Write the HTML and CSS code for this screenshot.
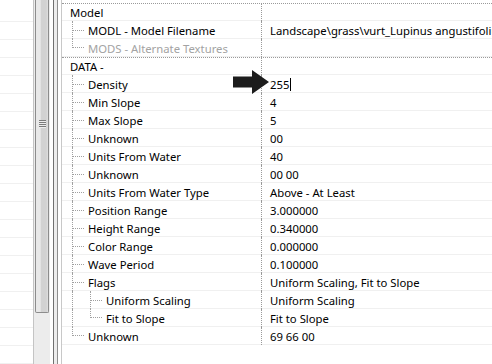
FILE: index.html
```html
<!DOCTYPE html>
<html lang="en">
<head>
    <meta charset="UTF-8">
    <meta name="viewport" content="width=device-width, initial-scale=1.0">
    <title>Propriétés</title>
    <link rel="stylesheet" href="styles.css">
</head>
<body>
    <div class="fenetre">
        <!-- Liste de gauche (coupée) -->
        <div class="liste"></div>

        <!-- Barre de défilement -->
        <div class="scrollbar">
            <div class="thumb"><span class="grip"></span></div>
            <div class="track"></div>
        </div>

        <div class="separateur"></div>

        <!-- Grille des propriétés -->
        <div class="grille">
            <div class="ligne categorie premiere">
                <div class="nom">Model</div>
                <div class="valeur"></div>
            </div>
            <div class="ligne">
                <div class="nom"><span class="branche"></span>MODL - Model Filename</div>
                <div class="valeur">Landscape\grass\vurt_Lupinus angustifolius.nif</div>
            </div>
            <div class="ligne inactive">
                <div class="nom"><span class="branche fin"></span>MODS - Alternate Textures</div>
                <div class="valeur"></div>
            </div>

            <div class="ligne categorie">
                <div class="nom">DATA -</div>
                <div class="valeur"></div>
            </div>
            <div class="ligne">
                <div class="nom"><span class="branche"></span>Density</div>
                <div class="valeur">255<span class="curseur"></span></div>
                <svg class="fleche" width="36" height="24" viewBox="0 0 36 24">
                    <polygon points="0,6.5 19,6.5 19,0 36,12 19,24 19,17.5 0,17.5" fill="#1c1c1c"/>
                </svg>
            </div>
            <div class="ligne">
                <div class="nom"><span class="branche"></span>Min Slope</div>
                <div class="valeur">4</div>
            </div>
            <div class="ligne">
                <div class="nom"><span class="branche"></span>Max Slope</div>
                <div class="valeur">5</div>
            </div>
            <div class="ligne">
                <div class="nom"><span class="branche"></span>Unknown</div>
                <div class="valeur">00</div>
            </div>
            <div class="ligne">
                <div class="nom"><span class="branche"></span>Units From Water</div>
                <div class="valeur">40</div>
            </div>
            <div class="ligne">
                <div class="nom"><span class="branche"></span>Unknown</div>
                <div class="valeur">00 00</div>
            </div>
            <div class="ligne">
                <div class="nom"><span class="branche"></span>Units From Water Type</div>
                <div class="valeur">Above - At Least</div>
            </div>
            <div class="ligne">
                <div class="nom"><span class="branche"></span>Position Range</div>
                <div class="valeur">3.000000</div>
            </div>
            <div class="ligne">
                <div class="nom"><span class="branche"></span>Height Range</div>
                <div class="valeur">0.340000</div>
            </div>
            <div class="ligne">
                <div class="nom"><span class="branche"></span>Color Range</div>
                <div class="valeur">0.000000</div>
            </div>
            <div class="ligne">
                <div class="nom"><span class="branche"></span>Wave Period</div>
                <div class="valeur">0.100000</div>
            </div>
            <div class="ligne">
                <div class="nom"><span class="branche"></span>Flags</div>
                <div class="valeur">Uniform Scaling, Fit to Slope</div>
            </div>
            <div class="ligne">
                <div class="nom"><span class="trait"></span><span class="branche"></span>Uniform Scaling</div>
                <div class="valeur">Uniform Scaling</div>
            </div>
            <div class="ligne">
                <div class="nom"><span class="trait"></span><span class="branche fin"></span>Fit to Slope</div>
                <div class="valeur">Fit to Slope</div>
            </div>
            <div class="ligne">
                <div class="nom"><span class="branche fin"></span>Unknown</div>
                <div class="valeur">69 66 00</div>
            </div>
        </div>
    </div>
</body>
</html>
```

FILE: styles.css
```css
/* Styles généraux */
body {
    margin: 0;
    background-color: #ffffff;
    font-family: "Noto Sans", "Open Sans", sans-serif;
    font-size: 11.3px;
    color: #000000;
}

.fenetre {
    display: flex;
    width: 492px;
    height: 364px;
    overflow: hidden;
}

/* Liste de gauche, seulement les lignes visibles */
.liste {
    width: 33px;
    background-image: repeating-linear-gradient(to bottom, transparent 0, transparent 17px, #f0f0f0 17px, #f0f0f0 18px);
    background-position: 0 4px;
}

/* Barre de défilement */
.scrollbar {
    width: 16px;
    border-left: 1px solid #c4c4c4;
    background-color: #ececec;
    display: flex;
    flex-direction: column;
}
.thumb {
    height: 313px;
    margin: 0 1px;
    border: 1px solid #8c8c8c;
    border-top: none;
    border-radius: 0 0 2px 2px;
    background: linear-gradient(to right, #e8e8e8 0, #e8e8e8 35%, #d2d2d2 45%, #d2d2d2 85%, #e0e0e0 100%);
    box-sizing: border-box;
    display: flex;
    justify-content: center;
}
.grip {
    width: 7px;
    height: 8px;
    margin-top: 120px;
    background: repeating-linear-gradient(to bottom, #7c7c7c 0, #7c7c7c 1px, #eeeeee 1px, #eeeeee 2px);
}
.track {
    flex: 1;
}

/* Séparateur entre les panneaux */
.separateur {
    width: 11px;
    background: linear-gradient(to right, #ffffff 0, #ffffff 3px, #707070 3px, #707070 4px, #ededed 4px, #ededed 7px, #8e8e8e 7px, #8e8e8e 8px, #ffffff 8px);
}

/* Grille */
.grille {
    flex: 1;
    border-left: 1px solid #c8c8c8;
    display: flex;
    flex-direction: column;
    min-width: 0;
}

.ligne {
    display: grid;
    grid-template-columns: 199px 1fr;
    height: 18px;
    border-bottom: 1px solid #f0f0f0;
    box-sizing: border-box;
    position: relative; /* pour la flèche */
}

.nom,
.valeur {
    display: flex;
    align-items: center;
    white-space: nowrap;
    overflow: hidden;
    margin-bottom: -1px; /* les pointillés passent sur la ligne */
}
.nom {
    padding-left: 10px;
}
.valeur {
    border-left: 1px dotted #9a9a9a;
    padding-left: 8px;
}

/* Catégories */
.categorie {
    border-top: 1px dotted #9a9a9a;
}
.categorie .nom {
    padding-left: 8px;
}
.premiere {
    margin-top: 3px;
}

.inactive {
    color: #a3a3a3;
}

/* Lignes de l'arbre */
.branche,
.trait {
    align-self: stretch;
    flex-shrink: 0;
    border-left: 1px dotted #a0a0a0;
    box-sizing: border-box;
}
.trait {
    width: 18px;
}
.branche {
    width: 12px;
    margin-right: 4px;
    display: flex;
    align-items: center;
}
.branche::before {
    content: "";
    width: 11px;
    border-top: 1px dotted #a0a0a0;
}
.branche.fin {
    align-self: flex-start;
    height: 9px;
    align-items: flex-end;
}

/* Curseur de saisie */
.curseur {
    display: inline-block;
    width: 1px;
    height: 13px;
    margin-left: 1px;
    background-color: #000000;
}

/* Flèche noire posée sur la grille */
.fleche {
    position: absolute;
    left: 171px;
    top: -5px;
}
```
